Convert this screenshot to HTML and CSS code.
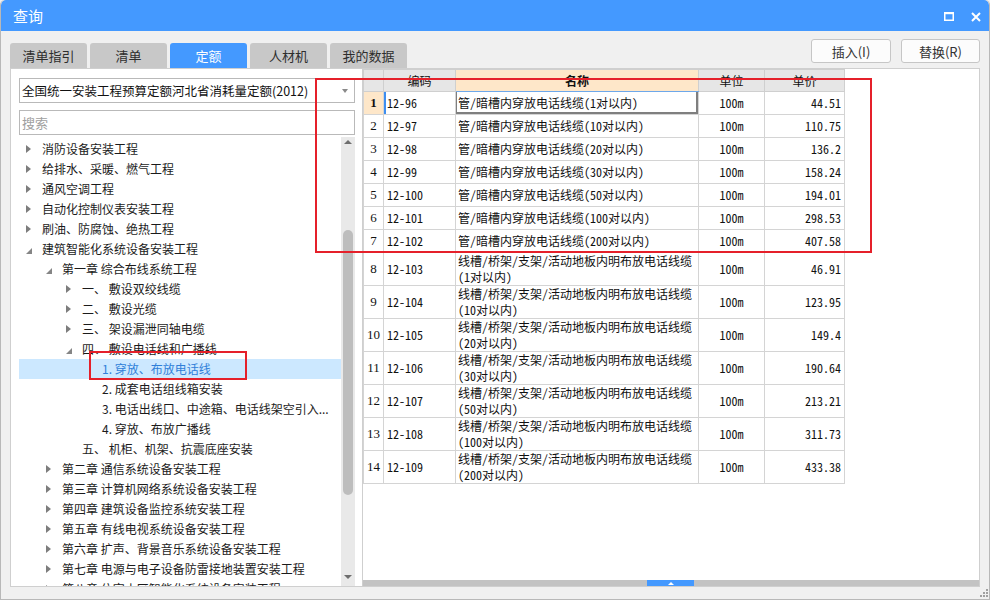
FILE: index.html
```html
<!DOCTYPE html>
<html lang="zh-CN">
<head>
<meta charset="utf-8">
<title>查询</title>
<link rel="stylesheet" href="styles.css">
</head>
<body>
<div class="window">
  <div class="titlebar">
    <span class="title">查询</span>
    <div class="winctrls">
      <svg class="ic-max" width="10" height="9" viewBox="0 0 10 9"><rect x="0.75" y="1" width="8.5" height="7.25" fill="none" stroke="#fff" stroke-width="1.5"/><rect x="0" y="0" width="10" height="2.2" fill="#fff"/></svg>
      <svg class="ic-close" width="10" height="10" viewBox="0 0 10 10"><path d="M1 1 L9 9 M9 1 L1 9" stroke="#fff" stroke-width="2" fill="none"/></svg>
    </div>
  </div>

  <div class="topbar">
    <div class="tabs">
      <div class="tab">清单指引</div>
      <div class="tab">清单</div>
      <div class="tab active">定额</div>
      <div class="tab">人材机</div>
      <div class="tab">我的数据</div>
    </div>
    <div class="actions">
      <button class="btn">插入(I)</button>
      <button class="btn btn2">替换(R)</button>
    </div>
  </div>

  <div class="main">
    <div class="leftpane">
      <div class="select"><span>全国统一安装工程预算定额河北省消耗量定额(2012)</span><span class="caret"></span></div>
      <div class="search">搜索</div>
      <div class="treewrap">
        <div class="tree">
          <div class="row l0"><span class="tw"><i class="col"></i></span>消防设备安装工程</div>
          <div class="row l0"><span class="tw"><i class="col"></i></span>给排水、采暖、燃气工程</div>
          <div class="row l0"><span class="tw"><i class="col"></i></span>通风空调工程</div>
          <div class="row l0"><span class="tw"><i class="col"></i></span>自动化控制仪表安装工程</div>
          <div class="row l0"><span class="tw"><i class="col"></i></span>刷油、防腐蚀、绝热工程</div>
          <div class="row l0"><span class="tw"><i class="exp"></i></span>建筑智能化系统设备安装工程</div>
          <div class="row l1"><span class="tw"><i class="exp"></i></span>第一章 综合布线系统工程</div>
          <div class="row l2"><span class="tw"><i class="col"></i></span>一、 敷设双绞线缆</div>
          <div class="row l2"><span class="tw"><i class="col"></i></span>二、 敷设光缆</div>
          <div class="row l2"><span class="tw"><i class="col"></i></span>三、 架设漏泄同轴电缆</div>
          <div class="row l2"><span class="tw"><i class="exp"></i></span>四、 敷设电话线和广播线</div>
          <div class="row l3 sel"><span class="tw"></span>1. 穿放、布放电话线</div>
          <div class="row l3"><span class="tw"></span>2. 成套电话组线箱安装</div>
          <div class="row l3"><span class="tw"></span>3. 电话出线口、中途箱、电话线架空引入...</div>
          <div class="row l3"><span class="tw"></span>4. 穿放、布放广播线</div>
          <div class="row l2"><span class="tw"></span>五、 机柜、机架、抗震底座安装</div>
          <div class="row l1"><span class="tw"><i class="col"></i></span>第二章 通信系统设备安装工程</div>
          <div class="row l1"><span class="tw"><i class="col"></i></span>第三章 计算机网络系统设备安装工程</div>
          <div class="row l1"><span class="tw"><i class="col"></i></span>第四章 建筑设备监控系统安装工程</div>
          <div class="row l1"><span class="tw"><i class="col"></i></span>第五章 有线电视系统设备安装工程</div>
          <div class="row l1"><span class="tw"><i class="col"></i></span>第六章 扩声、背景音乐系统设备安装工程</div>
          <div class="row l1"><span class="tw"><i class="col"></i></span>第七章 电源与电子设备防雷接地装置安装工程</div>
          <div class="row l1"><span class="tw"><i class="col"></i></span>第八章 住宅小区智能化系统设备安装工程</div>
        </div>
        <div class="vscroll">
          <span class="up"></span>
          <span class="thumb"></span>
          <span class="down"></span>
        </div>
      </div>
    </div>

    <div class="rightpane">
      <div class="gridarea">
        <table class="grid">
          <colgroup><col class="c0"><col class="c1"><col class="c2"><col class="c3"><col class="c4"></colgroup>
          <thead>
            <tr><th></th><th>编码</th><th class="hname">名称</th><th>单位</th><th>单价</th></tr>
          </thead>
          <tbody>
            <tr><td class="num cur">1</td><td class="code cur">12-96</td><td class="name cur">管/暗槽内穿放电话线缆(1对以内)</td><td class="unit">100m</td><td class="price">44.51</td></tr>
            <tr><td class="num">2</td><td class="code">12-97</td><td class="name">管/暗槽内穿放电话线缆(10对以内)</td><td class="unit">100m</td><td class="price">110.75</td></tr>
            <tr><td class="num">3</td><td class="code">12-98</td><td class="name">管/暗槽内穿放电话线缆(20对以内)</td><td class="unit">100m</td><td class="price">136.2</td></tr>
            <tr><td class="num">4</td><td class="code">12-99</td><td class="name">管/暗槽内穿放电话线缆(30对以内)</td><td class="unit">100m</td><td class="price">158.24</td></tr>
            <tr><td class="num">5</td><td class="code">12-100</td><td class="name">管/暗槽内穿放电话线缆(50对以内)</td><td class="unit">100m</td><td class="price">194.01</td></tr>
            <tr><td class="num">6</td><td class="code">12-101</td><td class="name">管/暗槽内穿放电话线缆(100对以内)</td><td class="unit">100m</td><td class="price">298.53</td></tr>
            <tr><td class="num">7</td><td class="code">12-102</td><td class="name">管/暗槽内穿放电话线缆(200对以内)</td><td class="unit">100m</td><td class="price">407.58</td></tr>
            <tr class="tall"><td class="num">8</td><td class="code">12-103</td><td class="name">线槽/桥架/支架/活动地板内明布放电话线缆<br>(1对以内)</td><td class="unit">100m</td><td class="price">46.91</td></tr>
            <tr class="tall"><td class="num">9</td><td class="code">12-104</td><td class="name">线槽/桥架/支架/活动地板内明布放电话线缆<br>(10对以内)</td><td class="unit">100m</td><td class="price">123.95</td></tr>
            <tr class="tall"><td class="num">10</td><td class="code">12-105</td><td class="name">线槽/桥架/支架/活动地板内明布放电话线缆<br>(20对以内)</td><td class="unit">100m</td><td class="price">149.4</td></tr>
            <tr class="tall"><td class="num">11</td><td class="code">12-106</td><td class="name">线槽/桥架/支架/活动地板内明布放电话线缆<br>(30对以内)</td><td class="unit">100m</td><td class="price">190.64</td></tr>
            <tr class="tall"><td class="num">12</td><td class="code">12-107</td><td class="name">线槽/桥架/支架/活动地板内明布放电话线缆<br>(50对以内)</td><td class="unit">100m</td><td class="price">213.21</td></tr>
            <tr class="tall"><td class="num">13</td><td class="code">12-108</td><td class="name">线槽/桥架/支架/活动地板内明布放电话线缆<br>(100对以内)</td><td class="unit">100m</td><td class="price">311.73</td></tr>
            <tr class="tall"><td class="num">14</td><td class="code">12-109</td><td class="name">线槽/桥架/支架/活动地板内明布放电话线缆<br>(200对以内)</td><td class="unit">100m</td><td class="price">433.38</td></tr>
          </tbody>
        </table>
      </div>
      <div class="hscroll"><span class="hthumb"><i></i></span></div>
    </div>
  </div>

  <div class="statusbar">
    <svg class="grip" width="8" height="8" viewBox="0 0 8 8" fill="#a0a0a0"><rect x="6" y="0" width="2" height="2"/><rect x="3" y="3" width="2" height="2"/><rect x="6" y="3" width="2" height="2"/><rect x="0" y="6" width="2" height="2"/><rect x="3" y="6" width="2" height="2"/><rect x="6" y="6" width="2" height="2"/></svg>
  </div>
</div>

<div class="mark mark-table"></div>
<div class="mark mark-node"></div>
</body>
</html>
```

FILE: styles.css
```css
* { box-sizing: border-box; }
html, body { margin: 0; padding: 0; }
body {
  width: 990px;
  height: 600px;
  overflow: hidden;
  background: #f0f0f0;
  font-family: "Noto Sans CJK SC", "Microsoft YaHei", sans-serif;
  color: #1b1b1b;
}

.window {
  width: 990px;
  height: 600px;
  display: flex;
  flex-direction: column;
  background: #f0f0f0;
  border: 1px solid #b8b8b8;
  border-top: none;
  border-radius: 5px 5px 0 0;
  overflow: hidden;
}

/* title bar */
.titlebar {
  height: 31px;
  flex: none;
  background: #4499ff;
  color: #fff;
  display: flex;
  align-items: center;
  justify-content: space-between;
  padding: 0 8px 0 12px;
  border-radius: 5px 5px 0 0;
}
.title { font-size: 15px; line-height: 31px; }
.winctrls { display: flex; align-items: center; gap: 17px; padding-top: 2px; }
.ic-max, .ic-close { display: block; }

/* tabs + buttons */
.topbar {
  height: 37px;
  flex: none;
  display: flex;
  justify-content: space-between;
  padding: 0 9px;
}
.tabs { display: flex; gap: 3px; align-self: flex-end; }
.tab {
  width: 77px;
  height: 25px;
  background: #c8c8c8;
  border-radius: 3px 3px 0 0;
  font-size: 13px;
  line-height: 25px;
  text-align: center;
  color: #2e2e2e;
}
.tab.active { background: #4499ff; color: #fff; }
.actions { display: flex; gap: 10px; margin-top: 8px; height: 24px; }
.btn {
  width: 80px;
  height: 24px;
  border: 1px solid #c6c6c6;
  border-radius: 3px;
  background: #fcfcfc;
  font-family: "Noto Sans CJK SC", sans-serif;
  font-size: 13px;
  color: #333;
  padding: 0;
}
.btn2 { width: 79px; }

/* main split */
.main {
  height: 519px;
  flex: none;
  display: flex;
  margin: 0 9px;
}
.leftpane {
  width: 352px;
  flex: none;
  background: #fff;
  border: 1px solid #cfcfcf;
  border-right: none;
  padding: 9px 7px 0 8px;
  display: flex;
  flex-direction: column;
}
.select {
  height: 25px;
  flex: none;
  border: 1px solid #b9b9b9;
  display: flex;
  align-items: center;
  justify-content: space-between;
  padding: 0 6px 0 2px;
  font-size: 12.5px;
  color: #111;
  white-space: nowrap;
}
.caret {
  width: 0; height: 0;
  border-left: 3.5px solid transparent;
  border-right: 3.5px solid transparent;
  border-top: 4px solid #8a8a8a;
}
.search {
  height: 25px;
  flex: none;
  margin-top: 7px;
  border: 1px solid #b9b9b9;
  padding-left: 2px;
  font-size: 13px;
  line-height: 23px;
  color: #a0a0a0;
}
.treewrap {
  flex: 1;
  min-height: 0;
  margin-top: 2px;
  display: flex;
}
.tree {
  flex: 1;
  min-width: 0;
  padding-top: 2px;
  overflow: hidden;
}
.row {
  height: 20px;
  display: flex;
  align-items: center;
  font-size: 12px;
  line-height: 20px;
  white-space: nowrap;
  overflow: hidden;
  color: #1b1b1b;
}
.row.l1 { padding-left: 20px; }
.row.l2 { padding-left: 40px; }
.row.l3 { padding-left: 60px; }
.row.sel { background: #cce8ff; color: #2f7fd9; }
.tw {
  width: 23px;
  height: 20px;
  flex: none;
  display: flex;
  align-items: center;
  padding-left: 7px;
}
.tw .col {
  width: 0; height: 0;
  border-left: 5px solid #7d7d7d;
  border-top: 4px solid transparent;
  border-bottom: 4px solid transparent;
}
.tw .exp {
  width: 0; height: 0;
  border-left: 6px solid transparent;
  border-bottom: 6px solid #858585;
  margin-top: 3px;
}

.vscroll {
  width: 14px;
  flex: none;
  background: #e9e9e9;
  display: flex;
  flex-direction: column;
  align-items: center;
}
.vscroll .up {
  margin-top: 3px;
  width: 0; height: 0;
  border-left: 4px solid transparent;
  border-right: 4px solid transparent;
  border-bottom: 4px solid #6e6e6e;
}
.vscroll .thumb {
  margin-top: 86px;
  width: 10px;
  height: 265px;
  border-radius: 5px;
  background: #bdbdbd;
}
.vscroll .down {
  margin-top: auto;
  margin-bottom: 7px;
  width: 0; height: 0;
  border-left: 4px solid transparent;
  border-right: 4px solid transparent;
  border-top: 4px solid #6e6e6e;
}

.rightpane {
  flex: 1;
  min-width: 0;
  background: #fff;
  border: 1px solid #cfcfcf;
  display: flex;
  flex-direction: column;
}
.gridarea { flex: 1; min-height: 0; overflow: hidden; }
.grid {
  border-collapse: collapse;
  table-layout: fixed;
  width: 481px;
  font-family: "Noto Sans Mono CJK SC", "Noto Sans CJK SC", sans-serif;
  font-size: 12px;
  color: #111;
}
.c0 { width: 20px; }
.c1 { width: 72px; }
.c2 { width: 243px; }
.c3 { width: 66px; }
.c4 { width: 80px; }
.grid th {
  height: 22px;
  line-height: 16px;
  background: #e6e6e6;
  border: 1px solid #cfcfcf;
  font-weight: normal;
  padding: 0;
  text-align: center;
}
.grid th.hname {
  background: #fee7c9;
  font-weight: bold;
  border-bottom: 1px solid #6ea8ea;
}
.grid td {
  height: 23px;
  line-height: 16px;
  border: 1px solid #d4d4d4;
  padding: 0 3px;
  vertical-align: middle;
  white-space: nowrap;
}
.grid tr.tall td { height: 33px; }
.grid td.name { padding-left: 2px; }
.grid td.num {
  padding: 0;
  text-align: center;
  font-family: "Liberation Serif", serif;
  font-size: 13px;
}
.grid td.unit { text-align: center; }
.grid td.price { text-align: right; }
.grid td.num.cur { background: #fee7c9; font-weight: bold; }
.grid td.code.cur { box-shadow: inset 2px 0 0 #3d8ef0; }
.grid td.name.cur { box-shadow: inset -2px -2px 0 #7f7f7f, inset 1px 0 0 #7f7f7f; }

.hscroll {
  height: 6px;
  flex: none;
  background: #c3c3c3;
  display: flex;
  padding-left: 284px;
}
.hthumb {
  width: 47px;
  height: 6px;
  background: #4499ff;
  display: flex;
  justify-content: center;
  align-items: center;
}
.hthumb i {
  width: 0; height: 0;
  border-left: 3px solid transparent;
  border-right: 3px solid transparent;
  border-bottom: 3px solid #fff;
}

.statusbar {
  flex: 1;
  display: flex;
  justify-content: flex-end;
  align-items: flex-end;
  padding: 0 1px 2px 0;
}
.grip { display: block; }

/* annotation overlays */
.mark {
  position: absolute;
  border: 2px solid #e5202a;
  pointer-events: none;
}
.mark-table { left: 315px; top: 78px; width: 557px; height: 175px; }
.mark-node { left: 89px; top: 351px; width: 158px; height: 29px; }
```
